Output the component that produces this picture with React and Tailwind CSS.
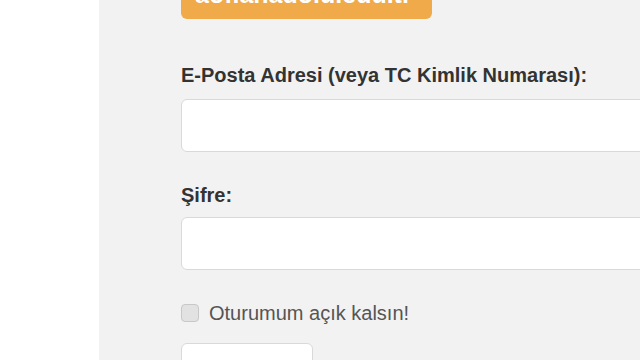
export default function App() {
  return (
    <div className="flex h-[360px] w-[640px] overflow-hidden bg-white font-['Liberation_Sans',Arial,sans-serif]">
      <div className="w-[99px] shrink-0 bg-white" />
      <div className="flex-1 bg-[#f2f2f2] pl-[82px]">
        {/* site badge, cut off at the top */}
        <div className="-mt-[20px] flex h-[39px] w-[251px] items-end rounded-b-[6px] bg-[#f0aa4a] pb-[12px] pl-[14px]">
          <span className="text-[25px] font-bold leading-none text-white">aof.anadolu.edu.tr</span>
        </div>

        <form className="w-[480px]">
          <label className="mt-[44px] block text-[20px] font-bold leading-[24px] text-[#333]">
            E-Posta Adresi (veya TC Kimlik Numarası):
          </label>
          <input
            type="text"
            className="mt-[12px] block h-[53px] w-full rounded-[6px] border border-[#d9d9d9] bg-white"
          />

          <label className="mt-[31px] block text-[20px] font-bold leading-[24px] text-[#333]">Şifre:</label>
          <input
            type="password"
            className="mt-[10px] block h-[53px] w-full rounded-[6px] border border-[#d9d9d9] bg-white"
          />

          <div className="mt-[31px] flex items-center gap-[10px]">
            <span className="h-[18px] w-[18px] rounded-[4px] border border-[#c8c8c8] bg-[#e2e2e2]" />
            <span className="text-[20px] leading-[24px] text-[#555]">Oturumum açık kalsın!</span>
          </div>

          <button
            type="button"
            className="mt-[18px] block h-[40px] w-[132px] rounded-[6px] border border-[#d9d9d9] bg-white"
          />
        </form>
      </div>
    </div>
  );
}
